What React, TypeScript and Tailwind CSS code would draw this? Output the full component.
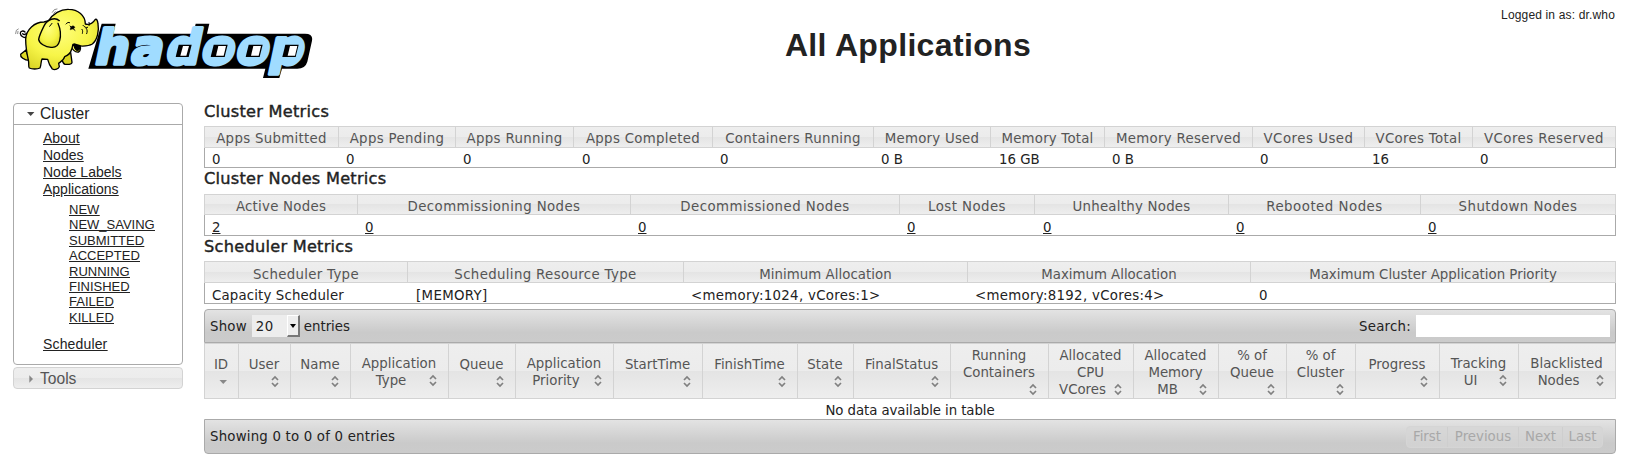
import React from "react";

type Metric = { label: string; value: string; link?: boolean; head?: string; body?: string };

const clusterMetrics: Metric[] = [
  { label: "Apps Submitted", value: "0", head: "tracking-[0.3px]" },
  { label: "Apps Pending", value: "0", head: "tracking-[0.35px]" },
  { label: "Apps Running", value: "0", head: "tracking-[0.35px]" },
  { label: "Apps Completed", value: "0", body: "pl-[8px]", head: "tracking-[0.3px]" },
  { label: "Containers Running", value: "0", head: "tracking-[0.25px]" },
  { label: "Memory Used", value: "0 B", head: "tracking-[0.25px]" },
  { label: "Memory Total", value: "16 GB", body: "pl-[8px]", head: "tracking-[0.2px]" },
  { label: "Memory Reserved", value: "0 B", head: "tracking-[0.3px]" },
  { label: "VCores Used", value: "0", head: "tracking-[0.5px]" },
  { label: "VCores Total", value: "16", head: "tracking-[0.3px]" },
  { label: "VCores Reserved", value: "0", head: "tracking-[0.45px]" },
];

const nodeMetrics: Metric[] = [
  { label: "Active Nodes", value: "2", link: true, head: "tracking-[0.25px]" },
  { label: "Decommissioning Nodes", value: "0", link: true, head: "tracking-[0.4px]" },
  { label: "Decommissioned Nodes", value: "0", link: true, head: "tracking-[0.45px]" },
  { label: "Lost Nodes", value: "0", link: true, head: "tracking-[0.45px]" },
  { label: "Unhealthy Nodes", value: "0", link: true, body: "pl-[8px]", head: "tracking-[0.25px]" },
  { label: "Rebooted Nodes", value: "0", link: true, head: "tracking-[0.5px]" },
  { label: "Shutdown Nodes", value: "0", link: true, head: "tracking-[0.45px]" },
];

const schedulerMetrics: Metric[] = [
  { label: "Scheduler Type", value: "Capacity Scheduler", head: "tracking-[0.3px]", body: "pl-[7px] tracking-[0.15px]" },
  { label: "Scheduling Resource Type", value: "[MEMORY]", head: "tracking-[0.35px]", body: "pl-[8px] tracking-[0.35px]" },
  { label: "Minimum Allocation", value: "<memory:1024, vCores:1>", head: "tracking-[0.05px]", body: "pl-[7px] tracking-[0.3px]" },
  { label: "Maximum Allocation", value: "<memory:8192, vCores:4>", head: "tracking-[-0.02px]", body: "pl-[7px] tracking-[0.3px]" },
  { label: "Maximum Cluster Application Priority", value: "0", body: "pl-[8px]" },
];

// An empty last line leaves the sort icon on a line of its own.
const appColumns: string[][] = [
  ["ID", ""],
  ["User", ""],
  ["Name", ""],
  ["Application", "Type"],
  ["Queue", ""],
  ["Application", "Priority"],
  ["StartTime", ""],
  ["FinishTime", ""],
  ["State", ""],
  ["FinalStatus", ""],
  ["Running", "Containers", ""],
  ["Allocated", "CPU", "VCores"],
  ["Allocated", "Memory", "MB"],
  ["% of", "Queue", ""],
  ["% of", "Cluster", ""],
  ["Progress", ""],
  ["Tracking", "UI"],
  ["Blacklisted", "Nodes"],
];

const appStates = ["NEW", "NEW_SAVING", "SUBMITTED", "ACCEPTED", "RUNNING", "FINISHED", "FAILED", "KILLED"];

const glass = "bg-[linear-gradient(to_bottom,#eeeeee_0%,#ececec_50%,#e4e4e4_50%,#eeeeee_100%)]";
const bar = "bg-[linear-gradient(to_bottom,#e3e3e3_0%,#cacaca_70%,#cbcbcb_100%)]";

function Logo() {
  return (
    <svg width="330" height="90" viewBox="0 0 990 270" className="block shrink-0">
      <defs>
        <radialGradient id="skin" cx="0.45" cy="0.35" r="0.7">
          <stop offset="0" stopColor="#ffff80" />
          <stop offset="0.6" stopColor="#f7f548" />
          <stop offset="1" stopColor="#dcd728" />
        </radialGradient>
      </defs>
      <path d="M305 71H347L340 101H580L587 71H628L621 101H915Q940 101 936 122L922 185Q916 206 892 206H846L838 234H789L796 206H265Z" fill="#000" />
      <g transform="translate(287 193) skewX(-12)">
        <text
          x="-8 100 206 312 416 516"
          y="0"
          fill="#a0dcff"
          stroke="#a0dcff"
          strokeWidth="11"
          strokeLinejoin="round"
          style={{ fontFamily: '"DejaVu Sans", sans-serif', fontWeight: 700, fontSize: 143 }}
        >
          hadoop
        </text>
      </g>
      <g fill="#000">
        <path d="M536 134H575L566 171H527Z" />
        <path d="M641 134H683L674 171H632Z" />
        <path d="M746 134H788L779 171H737Z" />
        <path d="M856 134H896L887 171H847Z" />
      </g>
      <g fill="#fff">
        <path d="M549 138H567L559 167H541Z" />
        <path d="M655 138H678L671 167H648Z" />
        <path d="M760 138H783L776 167H753Z" />
        <path d="M870 138H892L885 167H863Z" />
      </g>
      <g stroke="#000" strokeWidth="4" strokeLinejoin="round" strokeLinecap="round" fill="url(#skin)">
        <path d="M80 112C72 114 62 109 61 100C61 92 70 91 75 96M68 101C71 104 76 104 80 100" fill="none" />
        <path d="M78 150L62 163C60 170 72 181 88 181Z" fill="#dcd826" />
        <path d="M184 168C188 182 186 190 195 193C206 194 215 192 216 187L212 158L190 150Z" fill="#d9d420" />
        <path d="M213 135C214 148 226 158 236 156C242 152 243 145 240 136Z" />
        <path d="M132 66C104 66 78 88 77 118C77 138 80 158 85 180C88 192 84 200 88 204C96 208 112 208 120 204C124 195 122 186 126 177L143 178C146 190 150 198 157 207C165 211 176 207 178 200L176 190C184 184 192 180 194 170C204 166 212 158 214 150C217 144 217 139 219 133C232 139 262 141 277 132C292 120 298 92 294 72C293 62 290 56 286 58C278 70 268 76 256 72C256 46 234 28 206 28C182 27 158 42 146 62Z" />
        <path d="M178 62C165 50 142 58 133 76C126 90 118 105 116 118C117 130 136 141 153 142C168 144 176 134 179 122C184 104 180 84 174 70" />
        <path d="M222 132L240 137C240 145 237 151 231 151C225 148 222 142 222 132Z" fill="#000" />
        <path d="M211 88C211 80 217 76 222 79C226 82 224 86 217 87Z" fill="#000" strokeWidth="2" />
        <path d="M198 72C202 67 206 66 209 68M210 78L225 91M249 76C254 82 259 84 263 82M246 88C250 94 247 97 247 100M258 84C263 90 262 96 260 101M267 67C269 71 268 74 267 77M156 70L149 79" fill="none" strokeWidth="3" />
        <path d="M157 37L163 29L171 27M161 40L166 35M47 101L49 91L55 87M53 101L54 94" fill="none" stroke="#555" strokeWidth="2" />
      </g>
    </svg>
  );
}

function SortIcon() {
  return (
    <svg width="16" height="16" viewBox="0 0 16 16" className="block shrink-0">
      <path d="M5 7L8 4L11 7M5 10L8 13L11 10" fill="none" stroke="#808080" strokeWidth="1.7" />
    </svg>
  );
}

function SortedIcon() {
  return (
    <svg width="16" height="16" viewBox="0 0 16 16" className="block shrink-0">
      <path d="M4.5 7H12L8.25 11Z" fill="#888" />
    </svg>
  );
}

function HeaderCell({ lines, sorted }: { lines: string[]; sorted: boolean }) {
  return (
    <div className="flex flex-col justify-center border-l border-[#d3d3d3] pt-[2px] pr-[7px] pl-[6px] text-center leading-[17px] whitespace-nowrap text-[#555]">
      {lines.map((line, i) =>
        i < lines.length - 1 ? (
          <div key={i} className="flex h-[17px] justify-center">{line}</div>
        ) : (
          <div key={i} className="flex items-start">
            <div className="flex-1">{line}</div>
            {sorted ? <SortedIcon /> : <SortIcon />}
          </div>
        ),
      )}
    </div>
  );
}

function MetricsTable({ items, cols, head, body }: { items: Metric[]; cols: string; head: string; body: string }) {
  return (
    <div className="leading-[20px] whitespace-nowrap">
      <div className={`grid grid-rows-[minmax(0,1fr)] border-y border-r border-[#d3d3d3] text-center text-[#555] ${glass} ${cols} ${head}`}>
        {items.map((m) => (
          <div key={m.label} className={`border-l border-[#d3d3d3] ${m.head ?? ""}`}>{m.label}</div>
        ))}
      </div>
      <div className={`grid border-r border-b border-l border-[#aaa] ${cols} ${body}`}>
        {items.map((m) => (
          <div key={m.label} className={m.body ?? "pl-[7px]"}>
            {m.link ? <a className="underline underline-offset-1">{m.value}</a> : m.value}
          </div>
        ))}
      </div>
    </div>
  );
}

function Sidebar() {
  return (
    <nav className="ml-[13px] w-[170px] shrink-0 font-['Liberation_Sans',Arial,sans-serif]">
      <div className="h-[262px] rounded-[4px] border border-[#aaa]">
        <div className="flex h-[21px] items-center border-b border-[#aaa] pl-[13px] text-[15.6px]">
          <svg width="8" height="8" viewBox="0 0 8 8" className="block"><path d="M0 2H7.4L3.7 6Z" fill="#444" /></svg>
          <span className="pl-[5px]">Cluster</span>
        </div>
        <div className="flex flex-col items-start pt-[5px] pl-[29px] text-[14px] leading-[17px] underline underline-offset-1">
          <a>About</a>
          <a>Nodes</a>
          <a>Node Labels</a>
          <a>Applications</a>
          <div className="flex flex-col items-start pt-[4px] pb-[11px] pl-[26px] text-[13px] leading-[15.4px] underline underline-offset-1">
            {appStates.map((s) => (
              <a key={s}>{s}</a>
            ))}
          </div>
          <a className="tracking-[0.15px]">Scheduler</a>
        </div>
      </div>
      <div className={`mt-[2px] flex h-[22px] items-center rounded-[4px] border border-[#d3d3d3] pt-[1px] pl-[13px] text-[15.6px] text-[#555] ${glass}`}>
        <svg width="8" height="8" viewBox="0 0 8 8" className="block"><path d="M2.3 0.3V7.7L6 4Z" fill="#888" /></svg>
        <span className="pl-[5px]">Tools</span>
      </div>
    </nav>
  );
}

function Heading({ children, box }: { children: React.ReactNode; box: string }) {
  return (
    <h3 className={`text-[16.2px] leading-[16px] tracking-[0.25px] [-webkit-text-stroke:0.4px_#222] ${box}`}>{children}</h3>
  );
}

export default function App() {
  return (
    <div className="h-[458px] w-[1625px] overflow-hidden bg-white font-['DejaVu_Sans',sans-serif] text-[13.33px] text-[#222]">
      <header className="flex h-[103px] font-['Liberation_Sans',Arial,sans-serif]">
        <Logo />
        <h1 className="flex-1 pt-[27px] text-center text-[32px] leading-[36px] font-bold tracking-[0.35px]">All Applications</h1>
        <div className="w-[139px] pt-[8px] pr-[10px] text-right text-[12px] leading-[14px] tracking-[0.16px] whitespace-nowrap">Logged in as: dr.who</div>
      </header>

      <div className="flex">
        <Sidebar />
        <main className="ml-[21px] w-[1412px]">
          <Heading box="h-[23px] pt-[1px]">Cluster Metrics</Heading>
          <MetricsTable
            items={clusterMetrics}
            cols="grid-cols-[134px_117px_118px_139px_161px_117px_114px_148px_112px_108px_143px]"
            head="h-[22px] [&>div]:pt-[2px]"
            body="h-[20px] pt-[2px]"
          />
          <Heading box="h-[26px] pt-[3px]">Cluster Nodes Metrics</Heading>
          <MetricsTable
            items={nodeMetrics}
            cols="grid-cols-[153px_273px_269px_135px_194px_192px_195px]"
            head="h-[21px] [&>div]:pt-[2px]"
            body="h-[21px] pt-[3px]"
          />
          <Heading box="h-[25px] pt-[3px]">Scheduler Metrics</Heading>
          <MetricsTable
            items={schedulerMetrics}
            cols="grid-cols-[203px_276px_284px_283px_365px]"
            head="h-[22px] [&>div]:pt-[3px]"
            body="h-[21px] pt-[3px]"
          />

          <div className={`mt-[5px] flex h-[34px] items-center rounded-t-[4px] border border-[#aaa] pr-[5px] pl-[5px] ${bar}`}>
            <span className="pt-[2px] tracking-[0.2px]">Show</span>
            <div className="mr-[4px] ml-[5px] flex h-[22px] w-[48px] items-center bg-[#ededed] pl-[4px]">
              <span className="flex-1 pt-[2px] tracking-[0.5px]">20</span>
              <span className="flex h-[22px] w-[13px] items-center justify-center border-t border-r-2 border-b-2 border-l border-t-white border-r-[#777] border-b-[#777] border-l-white bg-[#ededed]">
                <svg width="6" height="4" viewBox="0 0 6 4" className="block"><path d="M0 0H6L3 4Z" fill="#000" /></svg>
              </span>
            </div>
            <span className="flex-1 pt-[2px]">entries</span>
            <span className="pt-[2px] pr-[5px] tracking-[0.25px]">Search:</span>
            <input className="h-[22px] w-[194px] bg-white" aria-label="Search" />
          </div>

          <div className={`grid h-[56px] grid-cols-[34px_52px_60px_98px_67px_98px_89px_95px_56px_97px_98px_85px_85px_68px_69px_84px_79px_97px] border-y border-r border-[#d3d3d3] ${glass}`}>
            {appColumns.map((lines, i) => (
              <HeaderCell key={i} lines={lines} sorted={i === 0} />
            ))}
          </div>
          <div className="h-[20px] pt-[2px] text-center leading-[20px] tracking-[-0.08px]">No data available in table</div>

          <div className={`flex h-[35px] items-center justify-between rounded-b-[4px] border border-[#aaa] pr-[12px] pl-[5px] ${bar}`}>
            <span className="tracking-[0.2px]">Showing 0 to 0 of 0 entries</span>
            <div className="grid h-[22px] grid-cols-[40px_71px_44px_40px] rounded-[4px] border border-[#d5d5d5] bg-[#d6d6d6]/70 text-center leading-[20px] text-[#a8a8a8]">
              <span>First</span>
              <span className="border-l border-[#cecece]">Previous</span>
              <span className="border-l border-[#cecece]">Next</span>
              <span className="border-l border-[#cecece]">Last</span>
            </div>
          </div>
        </main>
      </div>
    </div>
  );
}
